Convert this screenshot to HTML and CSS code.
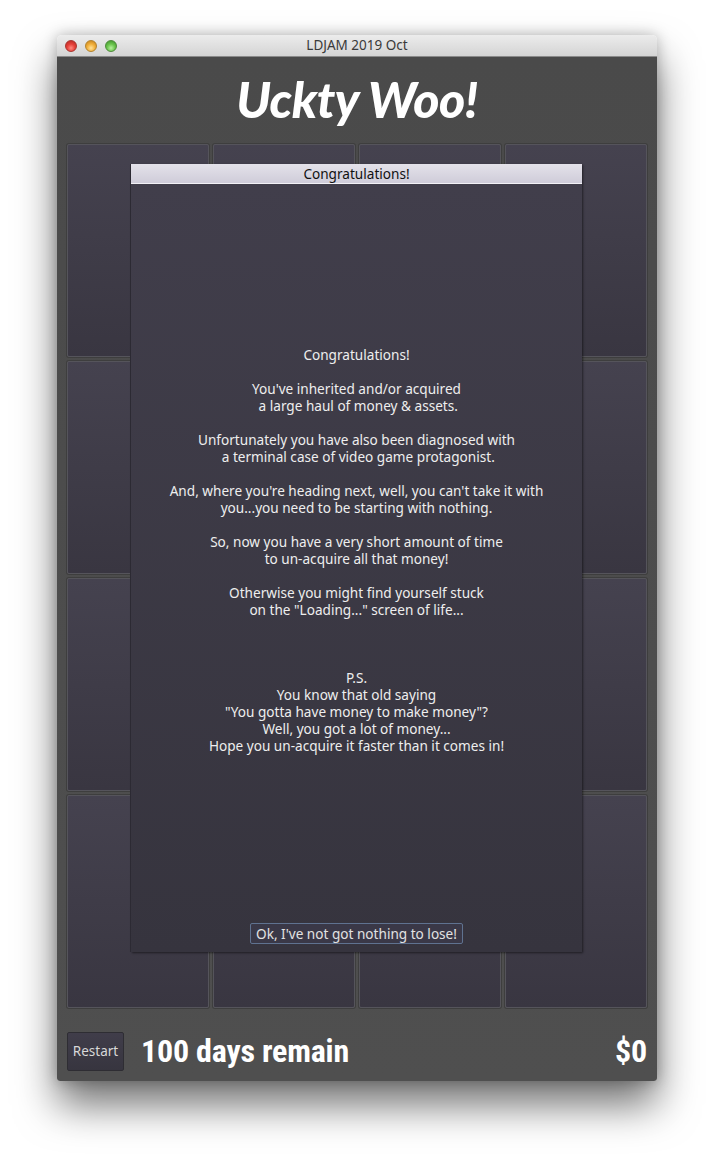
FILE: index.html
```html
<!DOCTYPE html>
<html lang="en">
<head>
<meta charset="utf-8">
<title>LDJAM 2019 Oct</title>
<link rel="stylesheet" href="styles.css">
</head>
<body>
<div class="window">
  <div class="titlebar">
    <div class="lights">
      <span class="light red"></span>
      <span class="light amber"></span>
      <span class="light green"></span>
    </div>
    <div class="wintitle">LDJAM 2019 Oct</div>
  </div>
  <div class="content">
    <h1 class="game-title">Uckty Woo!</h1>
    <div class="board">
      <div class="grid">
        <div class="card"></div><div class="card"></div><div class="card"></div><div class="card"></div>
        <div class="card"></div><div class="card"></div><div class="card"></div><div class="card"></div>
        <div class="card"></div><div class="card"></div><div class="card"></div><div class="card"></div>
        <div class="card"></div><div class="card"></div><div class="card"></div><div class="card"></div>
      </div>
      <div class="dialog">
        <div class="dialog-title">Congratulations!</div>
        <div class="dialog-body">
          <p class="message">Congratulations!

You've inherited and/or acquired
 a large haul of money &amp; assets.

Unfortunately you have also been diagnosed with
 a terminal case of video game protagonist.

And, where you're heading next, well, you can't take it with
you...you need to be starting with nothing.

So, now you have a very short amount of time
to un-acquire all that money!

Otherwise you might find yourself stuck
on the "Loading..." screen of life...



P.S.
You know that old saying
"You gotta have money to make money"?
Well, you got a lot of money...
Hope you un-acquire it faster than it comes in!</p>
          <button class="ok">Ok, I've not got nothing to lose!</button>
        </div>
      </div>
    </div>
    <div class="statusbar">
      <button class="restart">Restart</button>
      <div class="days">100 days remain</div>
      <div class="money">$0</div>
    </div>
  </div>
</div>
</body>
</html>
```
FILE: styles.css
```css
html, body {
  margin: 0;
  padding: 0;
  background: #ffffff;
}

body {
  width: 714px;
  height: 1160px;
  overflow: hidden;
}

.window {
  margin: 35px 0 0 57px;
  width: 600px;
  border-radius: 5px 5px 3px 3px;
  box-shadow: 0 24px 40px rgba(0, 0, 0, 0.55), 0 0 14px rgba(0, 0, 0, 0.25);
  overflow: hidden;
}

/* mac style title bar */
.titlebar {
  height: 21px;
  border-bottom: 1px solid #8a8a8a;
  background: linear-gradient(#ececec, #d4d4d4);
  display: flex;
  align-items: center;
  position: relative;
}

.lights {
  display: flex;
  gap: 8px;
  padding-left: 8px;
}

.light {
  width: 12px;
  height: 12px;
  border-radius: 50%;
  box-sizing: border-box;
}

.light.red {
  background: radial-gradient(circle at 50% 70%, #ff8a80 0%, #e6413a 45%, #b02822 100%);
  border: 1px solid #a8342e;
}

.light.amber {
  background: radial-gradient(circle at 50% 70%, #ffe29a 0%, #f2b13c 45%, #c07c18 100%);
  border: 1px solid #b2822c;
}

.light.green {
  background: radial-gradient(circle at 50% 70%, #b8f0a0 0%, #6cc64e 45%, #3a8c2a 100%);
  border: 1px solid #4e8a3a;
}

.wintitle {
  position: absolute;
  left: 0;
  right: 0;
  top: 0;
  line-height: 21px;
  text-align: center;
  font-family: "Noto Sans", "DejaVu Sans", sans-serif;
  font-size: 13.5px;
  color: #3a3a3a;
}

.content {
  background: linear-gradient(#4a4a4a, #4f4f4f);
  height: 1024px;
  display: flex;
  flex-direction: column;
}

.game-title {
  margin: 0;
  height: 88px;
  line-height: 84px;
  text-align: center;
  font-family: Lato, "Open Sans", sans-serif;
  font-weight: 900;
  font-style: italic;
  font-size: 50px;
  color: #ffffff;
  letter-spacing: -0.5px;
}

.board {
  position: relative;
  padding: 0 10px;
}

.grid {
  display: grid;
  grid-template-columns: repeat(4, 142px);
  grid-template-rows: repeat(4, 213px);
  gap: 4px;
}

.card {
  background: linear-gradient(#45424f, #393641);
  border: 1px solid #55545b;
  border-radius: 2px;
  box-shadow: 0 0 0 1px #3e3e3e;
}

/* popup over the board */
.dialog {
  position: absolute;
  left: 74px;
  top: 20px;
  width: 451px;
  height: 788px;
  display: flex;
  flex-direction: column;
  box-shadow: -1px 0 0 #2c2a33, 1px 1px 2px rgba(0, 0, 0, 0.5);
}

.dialog-title {
  height: 19px;
  line-height: 19px;
  border-bottom: 1px solid #f2f1f6;
  background: linear-gradient(#e4e2ea, #cfccd9);
  text-align: center;
  font-family: "Noto Sans", "DejaVu Sans", sans-serif;
  font-size: 13.6px;
  color: #111111;
}

.dialog-body {
  flex: 1;
  background: linear-gradient(#413e4b, #36343e);
  display: flex;
  flex-direction: column;
  align-items: center;
}

.message {
  margin: 0;
  padding-top: 162px;
  white-space: pre;
  text-align: center;
  font-family: "Noto Sans", "DejaVu Sans", sans-serif;
  font-size: 13.6px;
  line-height: 17px;
  color: #eeeeee;
}

.ok {
  margin-top: auto;
  margin-bottom: 8px;
  height: 21px;
  padding: 0 5px;
  background: #3a3847;
  border: 1px solid #5f7290;
  border-radius: 2px;
  font-family: "Noto Sans", "DejaVu Sans", sans-serif;
  font-size: 13.6px;
  line-height: 19px;
  color: #e2e2e2;
}

.statusbar {
  flex: 1;
  display: flex;
  align-items: center;
  padding: 23px 10px 10px;
}

.restart {
  width: 57px;
  height: 39px;
  padding: 0;
  background: linear-gradient(#403d4a, #37353f);
  border: 1px solid #2e2d33;
  border-radius: 2px;
  font-family: "Noto Sans", "DejaVu Sans", sans-serif;
  font-size: 13.5px;
  color: #d8d8d8;
}

.days,
.money {
  font-family: "Roboto Condensed", "Open Sans Condensed", "Open Sans", sans-serif;
  font-stretch: 75%;
  font-weight: 700;
  font-size: 32px;
  letter-spacing: -0.2px;
  line-height: 40px;
  color: #ffffff;
}

.days {
  margin-left: 17px;
}

.money {
  margin-left: auto;
}
```
